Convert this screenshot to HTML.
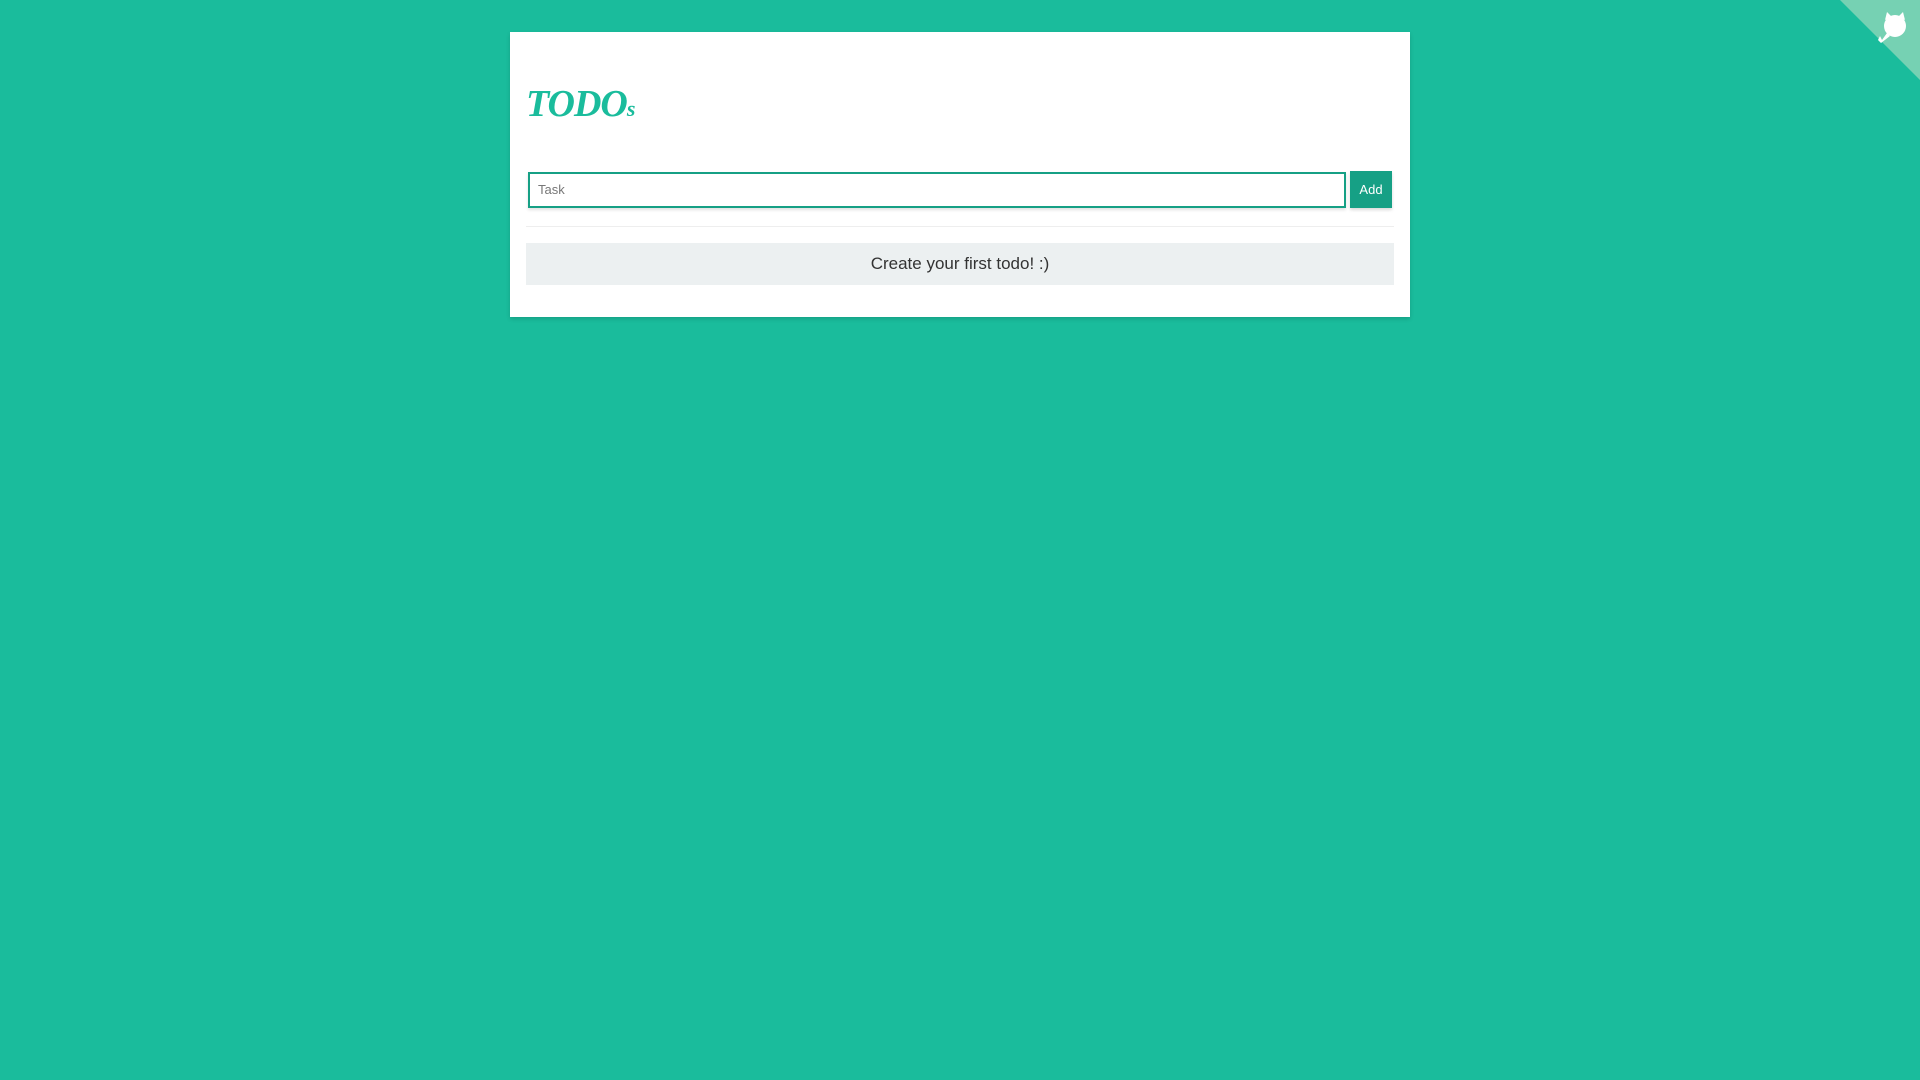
<!DOCTYPE html>
<html><head><meta charset="utf-8"><style>
html,body{margin:0;padding:0;width:1920px;height:1080px;background:#1abc9c;overflow:hidden;font-family:"Liberation Sans",sans-serif}
.card{position:absolute;left:510px;top:32px;width:900px;height:285px;background:#fff;box-shadow:0 2px 4px rgba(0,0,0,.15)}
h1{position:absolute;left:16px;top:50px;margin:0;font-family:"Liberation Serif",serif;font-style:italic;font-weight:bold;font-size:38px;color:#1abc9c;letter-spacing:-1px}
h1 small{font-size:22px}
.input{position:absolute;left:18px;top:140px;height:32px;border:2px solid #16a085;box-sizing:content-box;box-shadow:0 2px 3px rgba(0,0,0,.12);font-size:13px;color:#777;line-height:32px;padding-left:8px;width:806px}
.btn{position:absolute;left:840px;top:139px;width:42px;height:37px;background:#16a085;color:#fff;font-size:13px;text-align:center;line-height:37px;box-shadow:0 2px 3px rgba(0,0,0,.15)}
.hr{position:absolute;left:16px;top:194px;width:868px;height:1px;background:#eee}
.empty{position:absolute;left:16px;top:211px;width:868px;height:42px;background:#ecf0f1;color:#333;font-size:17px;text-align:center;line-height:42px}
.corner{position:absolute;right:0;top:0}
</style></head><body>
<div class="card">
<h1>TODO<small>s</small></h1>
<div class="input">Task</div>
<div class="btn">Add</div>
<div class="hr"></div>
<div class="empty">Create your first todo! :)</div>
</div>
<svg class="corner" width="80" height="80" viewBox="0 0 80 80">
<polygon points="0,0 80,0 80,80" fill="#76d1b3"/>
<g fill="#fff">
<circle cx="55" cy="26" r="11"/>
<polygon points="45,20 47,12 52,17"/>
<polygon points="65,20 63,12 58,17"/>
<polygon points="47,33 42,40 40,36 38,40 41,43 50,36"/>
</g>
</svg>
</body></html>
